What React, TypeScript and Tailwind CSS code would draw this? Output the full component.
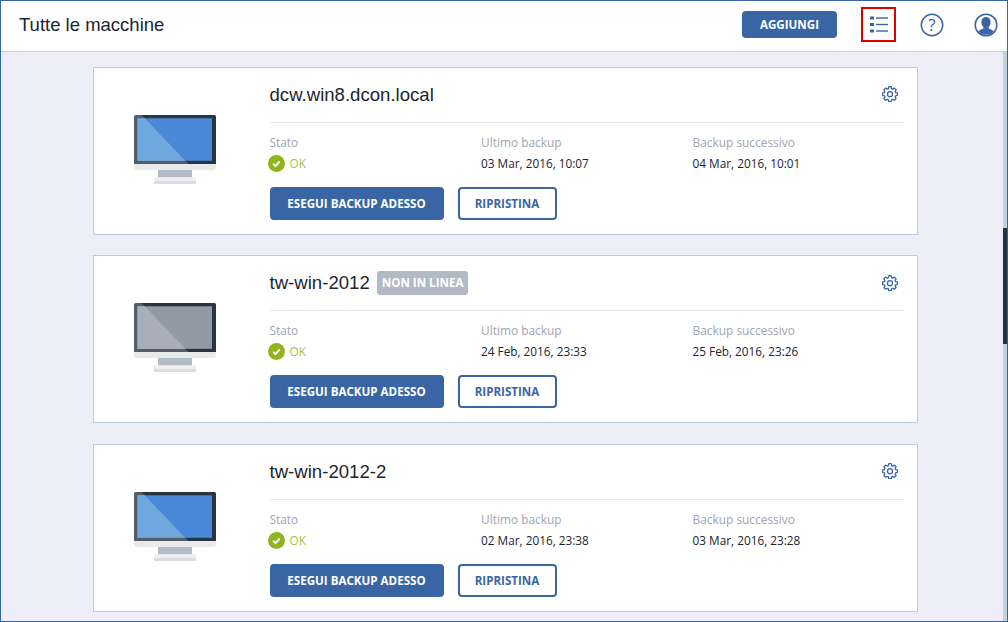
import React from "react";

const sans = "font-['Open_Sans',sans-serif]";
const arial = "font-['Liberation_Sans',Arial,sans-serif]";

function Monitor({ offline }: { offline?: boolean }) {
  return (
    <svg width="82" height="70" viewBox="0 0 82 70" className="block">
      <rect x="0" y="0" width="82" height="52" rx="1.5" fill="#2b3542" />
      <rect x="3.5" y="3.3" width="74.5" height="42.5" fill={offline ? "#929aa6" : "#4a88d8"} />
      <polygon points="0,0 7.5,0 54.5,49 0,49" fill="#ffffff" opacity="0.2" />
      <polygon points="3.5,3.3 10.6,3.3 50.5,45.8 3.5,45.8" fill={offline ? "#a9afba" : "#70a7dc"} />
      <path d="M0 49h82v3a3 3 0 0 1-3 3H3a3 3 0 0 1-3-3z" fill="#e9eaeb" />
      <rect x="24" y="55" width="34" height="7.5" fill="#b2bbc6" />
      <rect x="20" y="62.5" width="42" height="4" fill="#eeeeef" />
      <rect x="20" y="66" width="42" height="3" rx="0.5" fill="#dcdcdd" />
    </svg>
  );
}

function Gear() {
  return (
    <svg width="16" height="16" viewBox="0 0 16 16" fill="none" stroke="#3a65a5" strokeWidth="1.3" strokeLinejoin="round">
      <path d="M6.8 .7h2.4l.4 1.9 1.2.5 1.6-1 1.7 1.7-1 1.6.5 1.2 1.9.4v2.4l-1.9.4-.5 1.2 1 1.6-1.7 1.7-1.6-1-1.2.5-.4 1.9H6.8l-.4-1.9-1.2-.5-1.6 1-1.7-1.7 1-1.6-.5-1.2L.5 9.4V7l1.9-.4.5-1.2-1-1.6 1.7-1.7 1.6 1 1.2-.5z" />
      <circle cx="8" cy="8.2" r="2.5" />
    </svg>
  );
}

function Check() {
  return (
    <svg width="17" height="17" viewBox="0 0 17 17" className="shrink-0">
      <circle cx="8.5" cy="8.5" r="8.5" fill="#8fb51e" />
      <path d="M5.2 8.8l2.3 2.3 4.2-4.6" fill="none" stroke="#ffffff" strokeWidth="2" />
    </svg>
  );
}

function Info({ label, children }: { label: string; children: React.ReactNode }) {
  return (
    <div className="w-[211.5px]">
      <div className="text-[11.9px] leading-[16px] text-[#a0a5ae]">{label}</div>
      <div className="mt-[5px] h-[17px] flex items-center text-[11.8px] text-[#1c2530]">{children}</div>
    </div>
  );
}

function Card({ name, last, next, offline }: { name: string; last: string; next: string; offline?: boolean }) {
  return (
    <div className={`flex h-[168px] shrink-0 border border-[#bcc9e0] bg-white ${sans}`}>
      <div className="w-[176px] pl-[40px] pt-[47px]">
        <Monitor offline={offline} />
      </div>
      <div className="flex-1 pr-[13px]">
        <div className="h-[55px] flex items-center justify-between border-b border-[#e8e8e8]">
          <div className="flex items-center">
            <span className={`${arial} text-[18.6px] text-[#1c2530] leading-[24px]`}>{name}</span>
            {offline && (
              <span className="ml-[7px] h-[24px] px-[5px] rounded-[3px] bg-[#b2bac6] text-white font-bold text-[11.6px] leading-[24px]">
                NON IN LINEA
              </span>
            )}
          </div>
          <div className="mt-[-1px] mr-[6px]">
            <Gear />
          </div>
        </div>
        <div className="flex pt-[11px]">
          <Info label="Stato">
            <span className="flex items-center gap-[5px] ml-[-2px] text-[#a4c23b]">
              <Check />
              OK
            </span>
          </Info>
          <Info label={"Ultimo backup"}>{last}</Info>
          <Info label="Backup successivo">{next}</Info>
        </div>
        <div className="flex gap-[14px] mt-[15px]">
          <button className="w-[174px] h-[33px] rounded-[4px] bg-[#3a65a5] text-white text-[11.6px] font-bold">
            ESEGUI BACKUP ADESSO
          </button>
          <button className="w-[99px] h-[33px] rounded-[4px] border-2 border-[#3a65a5] bg-white text-[#3a65a5] text-[11.6px] font-bold">
            RIPRISTINA
          </button>
        </div>
      </div>
    </div>
  );
}

export default function App() {
  return (
    <div className="h-[622px] w-[1008px] overflow-hidden flex flex-col border border-[#3a65a5] bg-[#edeef7]">
      <header className={`h-[51px] shrink-0 flex items-center bg-white border-b border-[#c8d2e0] pl-[18px] pr-[9px] ${sans}`}>
        <h1 className={`${arial} text-[18.5px] text-[#1c2530] flex-1 mt-[-2px]`}>Tutte le macchine</h1>
        <button className="w-[95px] h-[27px] rounded-[4px] bg-[#3a65a5] text-white text-[11.6px] font-bold mt-[-3px]">
          AGGIUNGI
        </button>
        <div className="ml-[24px] w-[35px] h-[35px] border-[2px] border-[#e00000] flex items-center justify-center mt-[-3px]">
          <svg width="18" height="17" viewBox="0 0 18 17" fill="#3a65a5">
            <rect x="0" y="0.5" width="4" height="3" />
            <rect x="0" y="7" width="4" height="3" />
            <rect x="0" y="13.5" width="4" height="3" />
            <rect x="6" y="1.3" width="12" height="1.4" />
            <rect x="6" y="7.8" width="12" height="1.4" />
            <rect x="6" y="14.3" width="12" height="1.4" />
          </svg>
        </div>
        <div className="ml-[24px] mt-[-3px]">
          <svg width="24" height="24" viewBox="0 0 24 24" fill="none">
            <circle cx="12" cy="12" r="10.7" stroke="#3a65a5" strokeWidth="1.5" />
            <text x="12" y="18" textAnchor="middle" fontSize="17" fontFamily="Open Sans, sans-serif" fill="#3a65a5">?</text>
          </svg>
        </div>
        <div className="ml-[30px] mt-[-3px]">
          <svg width="24" height="24" viewBox="0 0 24 24" fill="none">
            <circle cx="12" cy="12" r="10.8" stroke="#3a65a5" strokeWidth="1.5" />
            <path d="M12 4c3 0 4.6 2.3 4.6 5.2 0 2-.8 3.8-2 4.8v1.4c2 .8 4 1.6 5 3a10.5 10.5 0 0 1-15.2 0c1-1.4 3-2.2 5-3V14c-1.2-1-2-2.8-2-4.8C7.4 6.3 9 4 12 4z" fill="#3a65a5" />
          </svg>
        </div>
      </header>
      <div className="flex flex-1 min-h-0">
        <main className="flex-1 min-w-0 overflow-hidden pt-[14.9px] pl-[92px] pr-[85px] flex flex-col gap-[20.5px]">
          <Card name="dcw.win8.dcon.local" last="03 Mar, 2016, 10:07" next="04 Mar, 2016, 10:01" />
          <Card name="tw-win-2012" last="24 Feb, 2016, 23:33" next="25 Feb, 2016, 23:26" offline />
          <Card name="tw-win-2012-2" last="02 Mar, 2016, 23:38" next="03 Mar, 2016, 23:28" />
        </main>
        <div className="w-[4px] bg-[#c5d0dd]">
          <div className="mt-[176px] h-[116px] bg-[#26323f]" />
        </div>
      </div>
    </div>
  );
}
